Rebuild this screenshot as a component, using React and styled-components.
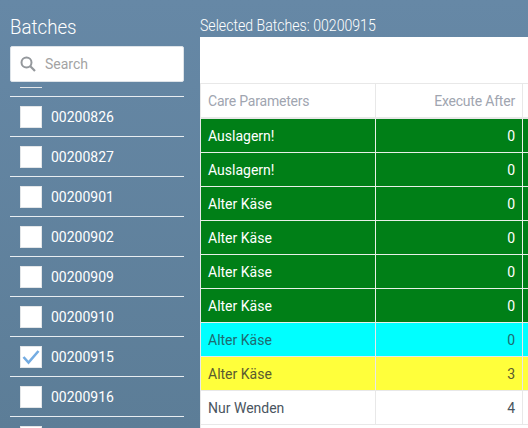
import React from 'react';
import styled, { createGlobalStyle } from 'styled-components';

const GlobalStyle = createGlobalStyle`
    html, body {
        margin: 0;
        padding: 0;
        width: 528px;
        height: 428px;
        overflow: hidden;
    }
    body {
        font-family: Roboto, "Liberation Sans", sans-serif;
    }
`;

const Page = styled.div`
    display: flex;
    width: 528px;
    height: 428px;
    overflow: hidden;
    background: linear-gradient(180deg, #6688a6 0%, #5c7d97 100%);
`;

const Sidebar = styled.aside`
    display: flex;
    flex-direction: column;
    flex: 0 0 200px;
    padding-left: 10px;
    box-sizing: border-box;
`;

const Title = styled.h2`
    margin: 14px 0 0;
    height: 32px;
    font-size: 21px;
    line-height: 26px;
    font-weight: 300;
    color: #fff;
    transform: scaleX(0.89);
    transform-origin: left;
`;

const SearchBox = styled.div`
    display: flex;
    align-items: center;
    gap: 9px;
    flex: 0 0 36px;
    width: 174px;
    padding-left: 9px;
    box-sizing: border-box;
    background: #fff;
    border: 1px solid #dde3e8;
    border-radius: 2px;
    color: #a3a3a3;
    font-size: 14px;
`;

const BatchViewport = styled.div`
    flex: 1;
    width: 174px;
    margin-top: 5px;
    overflow: hidden;
`;

const BatchList = styled.ul`
    list-style: none;
    margin: -30px 0 0;
    padding: 0;
`;

const BatchRow = styled.li`
    display: flex;
    align-items: center;
    gap: 9px;
    height: 39px;
    padding-left: 10px;
    border-bottom: 1px solid #e8edf1;
    color: #fff;
    font-size: 14px;
`;

const Check = styled.span`
    display: flex;
    align-items: center;
    justify-content: center;
    width: 22px;
    height: 22px;
    box-sizing: border-box;
    background: #fff;
    border: 1px solid #e3e6e8;
`;

const Main = styled.main`
    flex: 1;
    min-width: 0;
    display: flex;
    flex-direction: column;
`;

const Selected = styled.div`
    flex: 0 0 37px;
    padding-top: 15px;
    box-sizing: border-box;
    font-size: 17px;
    line-height: 20px;
    font-weight: 300;
    color: #fff;
    white-space: nowrap;
    transform: scaleX(0.83);
    transform-origin: left;
`;

const Toolbar = styled.div`
    flex: 0 0 46px;
    background: #fff;
`;

const Table = styled.div`
    flex: 1;
    display: grid;
    grid-template-columns: 175px 147px 5px;
    grid-template-rows: 35px;
    grid-auto-rows: 34px;
    background: #fff;
    border-left: 1px solid #e8e8e8;
    border-top: 1px solid #e8e8e8;
`;

const Cell = styled.div`
    display: flex;
    align-items: center;
    justify-content: ${(p) => (p.$right ? 'flex-end' : 'flex-start')};
    padding: 0 7px;
    box-sizing: border-box;
    font-size: 14px;
    white-space: nowrap;
    overflow: hidden;
    border-right: 1px solid ${(p) => p.$line};
    border-bottom: ${(p) => (p.$head ? 2 : 1)}px solid ${(p) => p.$line};
    background: ${(p) => p.$bg};
    color: ${(p) => p.$fg};
    letter-spacing: ${(p) => (p.$head ? '-0.2px' : '0')};
`;

const SearchIcon = () => (
    <svg width="16" height="16" viewBox="0 0 16 16">
        <circle cx="6.5" cy="6.5" r="5" fill="none" stroke="#94989c" strokeWidth="2" />
        <path d="M10.3 10.3 L15 15" fill="none" stroke="#94989c" strokeWidth="2.2" />
    </svg>
);

const batches = ['00200825', '00200826', '00200827', '00200901', '00200902', '00200909', '00200910', '00200915', '00200916', '00200917'];

const tones = {
    head: { bg: '#fff', fg: '#a0a5b0', line: '#e8e8e8' },
    green: { bg: '#007f17', fg: '#fff', line: '#e8f0e8' },
    cyan: { bg: '#00ffff', fg: '#1f6a70', line: '#e8e8e8' },
    yellow: { bg: '#ffff3b', fg: '#5a5a30', line: '#e8e8e8' },
    plain: { bg: '#fff', fg: '#4a5560', line: '#e8e8e8' },
};

const rows = [
    ['Care Parameters', 'Execute After', 'head'],
    ['Auslagern!', 0, 'green'],
    ['Auslagern!', 0, 'green'],
    ['Alter Käse', 0, 'green'],
    ['Alter Käse', 0, 'green'],
    ['Alter Käse', 0, 'green'],
    ['Alter Käse', 0, 'green'],
    ['Alter Käse', 0, 'cyan'],
    ['Alter Käse', 3, 'yellow'],
    ['Nur Wenden', 4, 'plain'],
];

const App = () => {
    const selected = '00200915';

    return (
        <Page>
            <GlobalStyle />
            <Sidebar>
                <Title>Batches</Title>
                <SearchBox>
                    <SearchIcon />
                    Search
                </SearchBox>
                <BatchViewport>
                    <BatchList>
                        {batches.map((batch) => (
                            <BatchRow key={batch}>
                                <Check>
                                    {batch === selected && (
                                        <svg width="18" height="16" viewBox="0 0 18 16">
                                            <path d="M1.5 8 L6.5 13.5 L16.5 2" fill="none" stroke="#74ace2" strokeWidth="2.6" />
                                        </svg>
                                    )}
                                </Check>
                                {batch}
                            </BatchRow>
                        ))}
                    </BatchList>
                </BatchViewport>
            </Sidebar>
            <Main>
                <Selected>Selected Batches: {selected}</Selected>
                <Toolbar />
                <Table>
                    {rows.map(([name, after, tone], i) => {
                        const t = tones[tone];
                        const head = tone === 'head';
                        return (
                            <React.Fragment key={i}>
                                <Cell $head={head} $bg={t.bg} $fg={t.fg} $line={t.line}>{name}</Cell>
                                <Cell $head={head} $right $bg={t.bg} $fg={t.fg} $line={t.line}>{after}</Cell>
                                <Cell $head={head} $bg={t.bg} $fg={t.fg} $line={t.line} />
                            </React.Fragment>
                        );
                    })}
                </Table>
            </Main>
        </Page>
    );
};

export default App;
